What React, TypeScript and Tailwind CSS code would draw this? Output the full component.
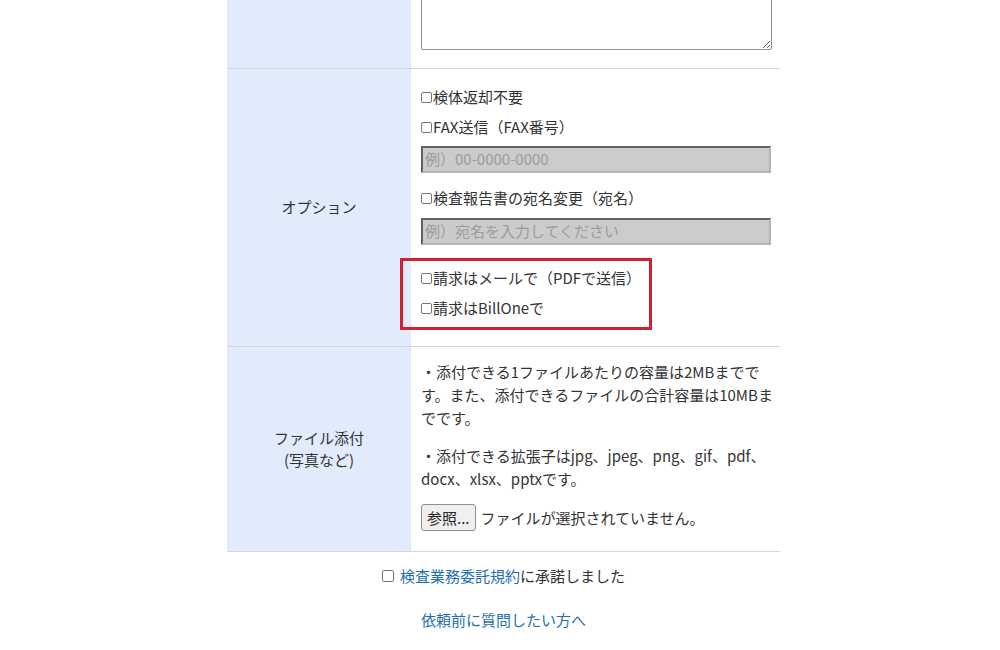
import React from "react";

const font = "font-['Meiryo','Noto_Sans_CJK_JP',sans-serif]";

function Box({ className = "" }: { className?: string }) {
  return (
    <span
      className={`inline-block w-[11px] h-[11px] border border-[#767676] rounded-[2px] bg-white shrink-0 ${className}`}
    />
  );
}

function CheckLine({ label }: { label: string }) {
  return (
    <div className="flex items-center h-[30px]">
      <Box className="mr-[1px]" />
      <span>{label}</span>
    </div>
  );
}

function GrayInput({ placeholder }: { placeholder: string }) {
  return (
    <div className="w-[350px] h-[27px] bg-[#cbcbcb] border-2 [border-style:inset] border-[#b5b5b5] flex items-center px-[2px] text-[#9b9b9b]">
      {placeholder}
    </div>
  );
}

export default function App() {
  return (
    <div className={`w-[1000px] h-[650px] bg-white overflow-hidden text-[15px] text-[#333] ${font}`}>
      <div className="ml-[227px] w-[553px]">
        {/* Comment row (textarea cut off at top) */}
        <div className="flex h-[69px] border-b border-[#d6d6d6] overflow-hidden">
          <div className="w-[184px] bg-[#e1ebfb]" />
          <div className="flex-1 flex items-end pl-[10px] pb-[18px]">
            <textarea
              className="w-[351px] h-[120px] border border-[#8f8f8f] rounded-[2px] bg-white shrink-0"
              readOnly
            />
          </div>
        </div>

        {/* Options */}
        <div className="flex border-b border-[#d6d6d6]">
          <div className="w-[184px] bg-[#e1ebfb] flex items-center justify-center">オプション</div>
          <div className="flex-1 pl-[10px] pt-[13px] pb-[23px]">
            <CheckLine label="検体返却不要" />
            <CheckLine label="FAX送信（FAX番号）" />
            <div className="mt-[4px]">
              <GrayInput placeholder="例）00-0000-0000" />
            </div>
            <div className="mt-[10px]">
              <CheckLine label="検査報告書の宛名変更（宛名）" />
            </div>
            <div className="mt-[5px]">
              <GrayInput placeholder="例）宛名を入力してください" />
            </div>
            <div className="relative mt-[18px]">
              <CheckLine label="請求はメールで（PDFで送信）" />
              <CheckLine label="請求はBillOneで" />
              <div className="absolute left-[-21px] top-[-5px] w-[252px] h-[72px] border-[3px] border-[#d2202f]" />
            </div>
          </div>
        </div>

        {/* File attachment */}
        <div className="flex border-b border-[#d6d6d6]">
          <div className="w-[184px] bg-[#e1ebfb] flex flex-col items-center justify-center leading-[22px]">
            <span>ファイル添付</span>
            <span>(写真など)</span>
          </div>
          <div className="flex-1 pl-[10px] pt-[13px] pb-[20px] leading-[23px]">
            <div>
              <div className="whitespace-nowrap">・添付できる1ファイルあたりの容量は2MBまでで</div>
              <div className="whitespace-nowrap">す。また、添付できるファイルの合計容量は10MBま</div>
              <div className="whitespace-nowrap">でです。</div>
            </div>
            <div className="mt-[15px]">
              <div className="whitespace-nowrap">・添付できる拡張子はjpg、jpeg、png、gif、pdf、</div>
              <div className="whitespace-nowrap">docx、xlsx、pptxです。</div>
            </div>
            <div className="mt-[14px] flex items-center gap-[5px]">
              <span className="h-[27px] px-[5px] flex items-center bg-[#efefef] border border-[#8f8f8f] rounded-[3px] text-[#222]">
                参照...
              </span>
              <span>ファイルが選択されていません。</span>
            </div>
          </div>
        </div>

        {/* Agreement */}
        <div className="flex items-center justify-center mt-[14px] h-[20px]">
          <span className="inline-block w-[12px] h-[12px] border border-[#767676] rounded-[2px] mr-[6px]" />
          <span className="text-[#1f6fae]">検査業務委託規約</span>
          <span>に承諾しました</span>
        </div>
        <div className="flex justify-center mt-[23px] text-[#1f6fae]">依頼前に質問したい方へ</div>
      </div>
    </div>
  );
}
